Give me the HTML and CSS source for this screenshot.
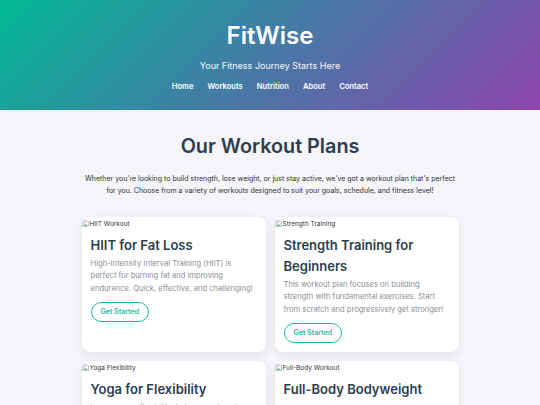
FILE: index.html
```html
<!DOCTYPE html>
<html lang="en">
<head>
<meta charset="utf-8">
<title>FitWise</title>
<link rel="stylesheet" href="styles.css">
</head>
<body>
<header class="hero">
  <h1 class="brand">FitWise</h1>
  <p class="tagline">Your Fitness Journey Starts Here</p>
  <nav class="nav">
    <a href="#">Home</a>
    <a href="#">Workouts</a>
    <a href="#">Nutrition</a>
    <a href="#">About</a>
    <a href="#">Contact</a>
  </nav>
</header>
<main class="plans">
  <h2 class="plans-title">Our Workout Plans</h2>
  <p class="plans-intro">Whether you're looking to build strength, lose weight, or just stay active, we've got a workout plan that's perfect for you. Choose from a variety of workouts designed to suit your goals, schedule, and fitness level!</p>
  <div class="grid">
    <article class="card">
      <div class="img-alt"><svg class="broken" viewBox="0 0 8 8"><path d="M0.5 0.5h5l2 2v5h-7z" fill="#f2f2f2" stroke="#9a9a9a" stroke-width="0.7"/><path d="M1.5 6.5l2-2 1.5 1.5 1-1v1.5z" fill="#5aa66a"/><circle cx="2.5" cy="2.5" r="0.8" fill="#4a8fd6"/></svg>HIIT Workout</div>
      <div class="card-body">
        <h3 class="card-title">HIIT for Fat Loss</h3>
        <p class="card-text">High-Intensity Interval Training (HIIT) is perfect for burning fat and improving endurance. Quick, effective, and challenging!</p>
        <a class="btn" href="#">Get Started</a>
      </div>
    </article>
    <article class="card">
      <div class="img-alt"><svg class="broken" viewBox="0 0 8 8"><path d="M0.5 0.5h5l2 2v5h-7z" fill="#f2f2f2" stroke="#9a9a9a" stroke-width="0.7"/><path d="M1.5 6.5l2-2 1.5 1.5 1-1v1.5z" fill="#5aa66a"/><circle cx="2.5" cy="2.5" r="0.8" fill="#4a8fd6"/></svg>Strength Training</div>
      <div class="card-body">
        <h3 class="card-title">Strength Training for Beginners</h3>
        <p class="card-text">This workout plan focuses on building strength with fundamental exercises. Start from scratch and progressively get stronger!</p>
        <a class="btn" href="#">Get Started</a>
      </div>
    </article>
    <article class="card">
      <div class="img-alt"><svg class="broken" viewBox="0 0 8 8"><path d="M0.5 0.5h5l2 2v5h-7z" fill="#f2f2f2" stroke="#9a9a9a" stroke-width="0.7"/><path d="M1.5 6.5l2-2 1.5 1.5 1-1v1.5z" fill="#5aa66a"/><circle cx="2.5" cy="2.5" r="0.8" fill="#4a8fd6"/></svg>Yoga Flexibility</div>
      <div class="card-body">
        <h3 class="card-title">Yoga for Flexibility</h3>
        <p class="card-text">Improve your flexibility, balance and posture with calming yoga sessions designed for every level.</p>
        <a class="btn" href="#">Get Started</a>
      </div>
    </article>
    <article class="card">
      <div class="img-alt"><svg class="broken" viewBox="0 0 8 8"><path d="M0.5 0.5h5l2 2v5h-7z" fill="#f2f2f2" stroke="#9a9a9a" stroke-width="0.7"/><path d="M1.5 6.5l2-2 1.5 1.5 1-1v1.5z" fill="#5aa66a"/><circle cx="2.5" cy="2.5" r="0.8" fill="#4a8fd6"/></svg>Full-Body Workout</div>
      <div class="card-body">
        <h3 class="card-title">Full-Body Bodyweight Workout</h3>
        <p class="card-text">No equipment needed. Train every muscle group with bodyweight exercises you can do anywhere.</p>
        <a class="btn" href="#">Get Started</a>
      </div>
    </article>
  </div>
</main>
</body>
</html>
```
FILE: styles.css
```css
* { box-sizing: border-box; }
html, body { margin: 0; padding: 0; }
body {
  font-family: Inter, "Open Sans", "Liberation Sans", sans-serif;
  background: #f4f4f9;
  color: #333;
}
.hero {
  background: linear-gradient(135deg, #02b994 0%, #3f7fa5 45%, #8e44ad 100%);
  color: #fff;
  text-align: center;
  padding: 21px 0 17px;
  height: 110px;
}
.brand {
  margin: 0;
  font-size: 24px;
  line-height: 30px;
  font-weight: 600;
}
.tagline {
  margin: 7px 0 0;
  font-size: 9px;
  line-height: 16px;
  opacity: 0.95;
}
.nav {
  margin-top: 7px;
  display: flex;
  justify-content: center;
  gap: 14px;
  line-height: 12px;
}
.nav a {
  color: #fff;
  text-decoration: none;
  font-size: 7.6px;
  font-weight: 600;
}
.plans {
  padding: 22px 0 0;
}
.plans-title {
  margin: 0;
  text-align: center;
  font-size: 19.8px;
  line-height: 28px;
  font-weight: 600;
  color: #2c3e50;
}
.plans-intro {
  width: 380px;
  margin: 13px auto 0;
  text-align: center;
  font-size: 7px;
  line-height: 12px;
  color: #333;
}
.grid {
  width: 377px;
  margin: 20px auto 0;
  display: grid;
  grid-template-columns: 1fr 1fr;
  gap: 9px;
}
.card {
  background: #fff;
  border-radius: 8px;
  box-shadow: 0 3px 10px rgba(0, 0, 0, 0.08);
  overflow: hidden;
}
.img-alt {
  height: 12px;
  display: flex;
  align-items: center;
  gap: 1px;
  font-size: 6.5px;
  color: #333;
  padding-top: 1px;
}
.broken { width: 7px; height: 7px; }
.card-body {
  padding: 6px 9px 9px;
}
.card-title {
  margin: 0 0 2px;
  font-size: 13px;
  line-height: 21px;
  font-weight: 600;
  color: #2c3e50;
}
.card-text {
  margin: 0 0 7px;
  font-size: 7.6px;
  line-height: 12.4px;
  color: #8a8f94;
}
.btn {
  display: block;
  width: fit-content;
  height: 20px;
  line-height: 18px;
  padding: 0 9px;
  border: 1px solid #1abc9c;
  border-radius: 12px;
  color: #1abc9c;
  font-size: 7px;
  font-weight: 600;
  text-decoration: none;
}
```
